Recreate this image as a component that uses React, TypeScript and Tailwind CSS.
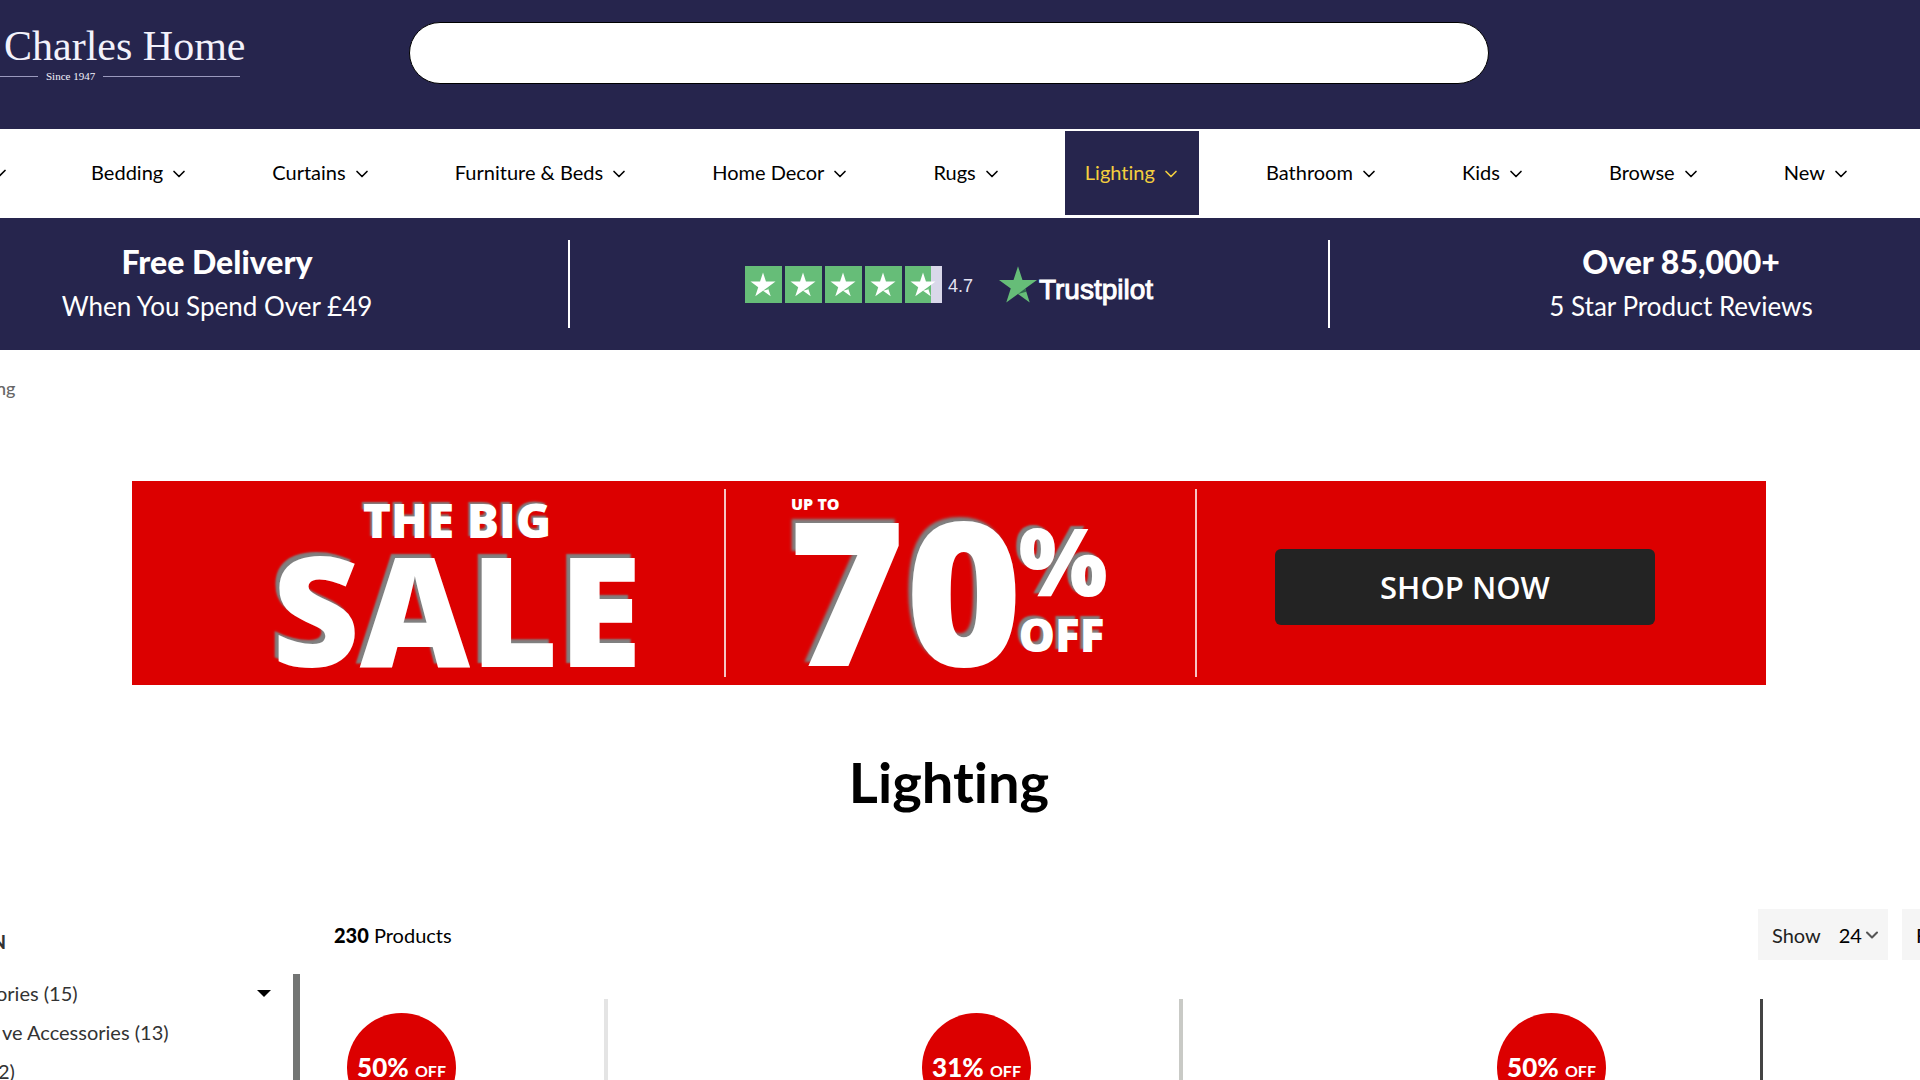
import { ChevronDown } from 'lucide-react';

type NavItem = { label: string; active?: boolean };

const navItems: NavItem[] = [
  { label: 'Bedding' },
  { label: 'Curtains' },
  { label: 'Furniture & Beds' },
  { label: 'Home Decor' },
  { label: 'Rugs' },
  { label: 'Lighting', active: true },
  { label: 'Bathroom' },
  { label: 'Kids' },
  { label: 'Browse' },
  { label: 'New' },
];

const products = [
  { discount: '50%', cord: 'w-1 bg-[#e4e4e4] left-[270px]' },
  { discount: '31%', cord: 'w-1 bg-[#c9cac6] left-[270px]' },
  { discount: '50%', cord: 'w-[3px] bg-[#444444] left-[276px]' },
];

function StarShape({ tail }: { tail: string }) {
  return (
    <>
      <path d="M50 0 L61.8 36.3 H100 L69.1 58.8 L80.9 95.1 L50 72.7 L19.1 95.1 L30.9 58.8 L0 36.3 H38.2 Z" fill="currentColor" />
      <path d="M50 72.7 L71.8 67.2 L69.1 58.8 Z" fill={tail} />
    </>
  );
}

function RatingStar({ partial }: { partial?: boolean }) {
  return (
    <svg viewBox="0 0 37 37" className="size-[37px] text-white" aria-hidden="true">
      <rect width="37" height="37" fill="#66bd78" />
      {partial && <rect x="26" width="11" height="37" fill="#d9d8ea" />}
      <g transform="translate(5.5 6.5) scale(0.25)">
        <StarShape tail="#66bd78" />
      </g>
    </svg>
  );
}

function Header() {
  return (
    <header className="h-[129px] bg-[#26254d] flex items-start">
      <a href="#" className="w-[409px] shrink-0 pt-5 text-[#f3f2fb] font-['Liberation_Serif',serif]">
        <span className="block pl-1 text-[42px] leading-[52px] whitespace-nowrap">Charles Home</span>
        <span className="flex items-center gap-2 w-60 text-[11px] leading-2">
          <span className="h-px w-[38px] bg-[#9a99bd]" />
          Since 1947
          <span className="h-px flex-1 bg-[#9a99bd]" />
        </span>
      </a>
      <input
        type="text"
        aria-label="Search"
        className="mt-[22px] mr-[431px] flex-1 h-[62px] rounded-full border border-black bg-white px-8 text-xl outline-none"
      />
    </header>
  );
}

function Nav() {
  return (
    <nav className="h-[89px] bg-white flex items-start justify-between pt-0.5 pr-[53px] text-black text-xl">
      <button aria-label="Previous category" className="flex items-center h-[84px] -ml-2.5 pr-3.5">
        <ChevronDown className="size-5" />
      </button>
      {navItems.map((item) => (
        <a
          key={item.label}
          href="#"
          className={
            item.active
              ? 'flex items-center gap-1.5 h-[84px] pl-5 pr-[18px] pb-0.5 bg-[#26254d] text-[#f3cf3e]'
              : 'flex items-center gap-1.5 h-[84px] pl-5 pr-4 pb-0.5'
          }
        >
          {item.label}
          <ChevronDown className="size-5 mt-1" />
        </a>
      ))}
    </nav>
  );
}

function PromoBar() {
  return (
    <section className="h-[132px] bg-[#26254d] text-white flex items-center text-center">
      <div className="w-[568px] pr-[134px]">
        <p className="text-[32px] leading-[44px] font-black">Free Delivery</p>
        <p className="text-[26px] leading-[44px]">When You Spend Over £49</p>
      </div>
      <div className="flex-1 h-[88px] border-x-2 border-white flex items-center justify-center">
        <div className="flex gap-[3px]">
          <RatingStar />
          <RatingStar />
          <RatingStar />
          <RatingStar />
          <RatingStar partial />
        </div>
        <span className="ml-1.5 mt-1 text-lg font-['Liberation_Sans',sans-serif] text-[#e4e3f2]">4.7</span>
        <svg viewBox="0 0 100 96" className="ml-[26px] w-[38px] h-[37px] text-[#66bd78]" aria-hidden="true">
          <StarShape tail="#2f6a4e" />
        </svg>
        <span className="ml-0.5 mt-3 text-[28px] leading-8 font-['Liberation_Sans',sans-serif] [-webkit-text-stroke:1px_#ffffff]">
          Trustpilot
        </span>
      </div>
      <div className="w-[590px] pl-[112px]">
        <p className="text-[32px] leading-[44px] font-black">Over 85,000+</p>
        <p className="text-[26px] leading-[44px]">5 Star Product Reviews</p>
      </div>
    </section>
  );
}

function SaleBanner() {
  return (
    <section className="mt-[93px] ml-[132px] mr-[154px] h-[204px] bg-[#dc0000] text-white flex items-center font-['Open_Sans',sans-serif]">
      <div className="w-[592px] pl-[58px] text-center font-extrabold">
        <p className="text-[48px] leading-[52px] [text-shadow:-2px_-2px_2px_#808080]">THE BIG</p>
        <p className="text-[152px] leading-[126px] [text-shadow:-4px_-4px_2px_#808080]">SALE</p>
      </div>
      <div className="w-[473px] h-[188px] border-x-2 border-[#f6c4c4] pl-[62px]">
        <p className="h-5 pl-[3px] text-base leading-[30px] font-extrabold">UP TO</p>
        <div className="flex">
          <span className="text-[200px] leading-[160px] font-extrabold [text-shadow:-4px_-4px_3px_#808080]">70</span>
          <div className="-ml-1 font-extrabold">
            <p className="text-[94px] leading-[102px] [text-shadow:-4px_-3px_2px_#808080]">%</p>
            <p className="text-[46px] leading-[46px] [text-shadow:-3px_-3px_2px_#808080]">OFF</p>
          </div>
        </div>
      </div>
      <div className="flex-1 flex justify-center pt-2 pr-[33px]">
        <button className="w-[380px] h-[76px] rounded-md bg-[#232323] text-[31px] font-semibold">SHOP NOW</button>
      </div>
    </section>
  );
}

function Sidebar() {
  return (
    <aside className="w-[334px] shrink-0 pt-[13px] text-[#333333] text-xl">
      <h2 className="h-[52px] text-lg leading-10 font-black -ml-2">N</h2>
      <div className="flex w-[300px]">
        <ul className="-ml-1 flex-1 leading-[39px]">
          <li className="flex justify-between items-center pr-[22px]">
            <a href="#">ories (15)</a>
            <svg viewBox="0 0 14 7" className="w-3.5 h-[7px]" aria-hidden="true">
              <path d="M0 0 H14 L7 7 Z" fill="#000" />
            </svg>
          </li>
          <li className="pl-1.5"><a href="#">ve Accessories (13)</a></li>
          <li className="pl-0.5"><a href="#">2)</a></li>
        </ul>
        <div className="w-[7px] bg-[#737574]" />
      </div>
    </aside>
  );
}

function ProductList() {
  return (
    <main className="flex-1 min-w-0">
      <div className="flex items-center h-[51px] text-xl text-black">
        <p className="flex-1"><b className="font-black">230</b> Products</p>
        <label className="flex items-center gap-[18px] h-full px-3.5 mr-3.5 w-[130px] bg-[#f5f5f5] text-[#222222] relative">
          Show
          <select className="appearance-none bg-transparent w-10 text-black outline-none">
            <option>24</option>
          </select>
          <ChevronDown strokeWidth={2.5} className="absolute right-1.5 size-5 text-[#555555] pointer-events-none" />
        </label>
        <button className="w-[18px] h-full bg-[#f5f5f5] pl-3.5 text-left overflow-hidden">F</button>
      </div>
      <div className="mt-[39px] flex">
        {products.map((product, i) => (
          <article key={i} className="relative w-[575px] shrink-0 h-[81px] pl-[13px] pt-3.5">
            <div className={`absolute top-0 bottom-0 ${product.cord}`} />
            <div className="size-[109px] rounded-full bg-[#dc0000] text-white flex items-center justify-center">
              <p className="text-[26px] font-black whitespace-nowrap">
                {product.discount} <span className="text-base font-bold">OFF</span>
              </p>
            </div>
          </article>
        ))}
      </div>
    </main>
  );
}

export default function App() {
  return (
    <div className="h-screen overflow-hidden bg-white font-[Lato,sans-serif] [font-variant-ligatures:none]">
      <Header />
      <Nav />
      <PromoBar />
      <p className="h-[38px] -ml-1 pt-[22px] text-lg leading-8 font-medium text-[#666666]">ng</p>
      <SaleBanner />
      <h1 className="mt-[61px] pr-[22px] text-center text-[56px] leading-[72px] font-bold text-black">Lighting</h1>
      <div className="mt-[91px] flex">
        <Sidebar />
        <ProductList />
      </div>
    </div>
  );
}
